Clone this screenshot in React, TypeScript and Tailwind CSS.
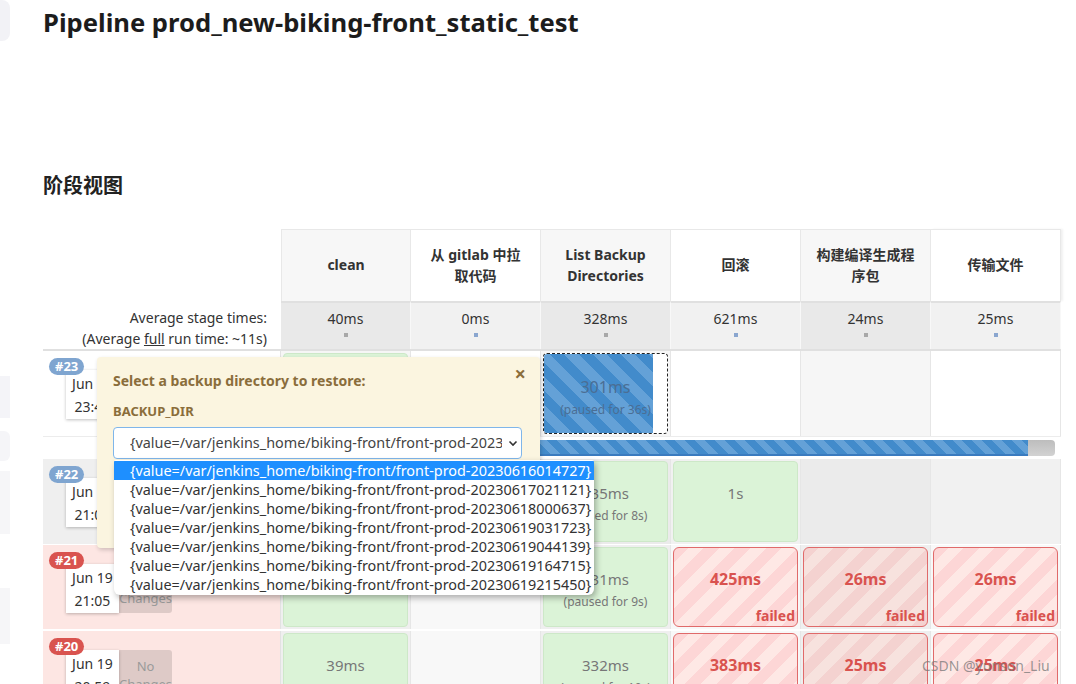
import React from 'react';

const FONT = "font-['Noto_Sans','Noto_Sans_CJK_SC',sans-serif]";

const stages = [
  { l1: 'clean', l2: '', avg: '40ms' },
  { l1: '从 gitlab 中拉', l2: '取代码', avg: '0ms' },
  { l1: 'List Backup', l2: 'Directories', avg: '328ms' },
  { l1: '回滚', l2: '', avg: '621ms' },
  { l1: '构建编译生成程', l2: '序包', avg: '24ms' },
  { l1: '传输文件', l2: '', avg: '25ms' },
];

const options = [
  '20230616014727',
  '20230617021121',
  '20230618000637',
  '20230619031723',
  '20230619044139',
  '20230619164715',
  '20230619215450',
];

type Cell =
  | { kind: 'empty' }
  | { kind: 'ok'; time: string; paused?: string }
  | { kind: 'fail'; time: string }
  | { kind: 'paused'; time: string; paused: string };

type Build = {
  id: string;
  badge: string;
  rowBg: string;
  odd: string;
  even: string;
  date: string;
  time: string;
  h: string;
  cells: Cell[];
};

const builds: Build[] = [
  {
    id: '#23',
    badge: 'bg-[#7fa5d0]',
    rowBg: 'bg-white',
    odd: 'bg-[#f6f6f6]',
    even: 'bg-white',
    date: 'Jun 19',
    time: '23:45',
    h: 'h-[85px]',
    cells: [
      { kind: 'ok', time: '40ms' },
      { kind: 'empty' },
      { kind: 'paused', time: '301ms', paused: '(paused for 36s)' },
      { kind: 'empty' },
      { kind: 'empty' },
      { kind: 'empty' },
    ],
  },
  {
    id: '#22',
    badge: 'bg-[#7fa5d0]',
    rowBg: 'bg-[#efefef]',
    odd: 'bg-[#ebebeb]',
    even: 'bg-[#f1f1f1]',
    date: 'Jun 19',
    time: '21:08',
    h: 'h-[85px]',
    cells: [
      { kind: 'ok', time: '38ms' },
      { kind: 'empty' },
      { kind: 'ok', time: '335ms', paused: '(paused for 8s)' },
      { kind: 'ok', time: '1s' },
      { kind: 'empty' },
      { kind: 'empty' },
    ],
  },
  {
    id: '#21',
    badge: 'bg-[#d9534f]',
    rowBg: 'bg-[#fde6e3]',
    odd: 'bg-[#efefef]',
    even: 'bg-[#f8f8f8]',
    date: 'Jun 19',
    time: '21:05',
    h: 'h-[84px]',
    cells: [
      { kind: 'ok', time: '41ms' },
      { kind: 'empty' },
      { kind: 'ok', time: '331ms', paused: '(paused for 9s)' },
      { kind: 'fail', time: '425ms' },
      { kind: 'fail', time: '26ms' },
      { kind: 'fail', time: '26ms' },
    ],
  },
  {
    id: '#20',
    badge: 'bg-[#d9534f]',
    rowBg: 'bg-[#fde6e3]',
    odd: 'bg-[#efefef]',
    even: 'bg-[#f8f8f8]',
    date: 'Jun 19',
    time: '20:59',
    h: 'h-[84px]',
    cells: [
      { kind: 'ok', time: '39ms' },
      { kind: 'empty' },
      { kind: 'ok', time: '332ms', paused: '(paused for 10s)' },
      { kind: 'fail', time: '383ms' },
      { kind: 'fail', time: '25ms' },
      { kind: 'fail', time: '25ms' },
    ],
  },
];

function StageCell({ cell, col }: { cell: Cell; col: number }) {
  if (cell.kind === 'empty') return null;
  if (cell.kind === 'ok') {
    return (
      <div className="flex h-full flex-col items-center rounded-[4px] border border-[#cde8c8] bg-[#dbf3d7] pt-[20px] text-[#777]">
        <span className="text-[15px] leading-[22px]">{cell.time}</span>
        {cell.paused && <span className="mt-[4px] text-[12px] leading-[16px]">{cell.paused}</span>}
      </div>
    );
  }
  if (cell.kind === 'paused') {
    return (
      <div className="relative h-full overflow-hidden rounded-[4px] border border-dashed border-[#222] bg-white">
        <div className="h-full w-[89%] bg-[image:repeating-linear-gradient(45deg,#428bcb_0px,#428bcb_10px,#64a1d7_10px,#64a1d7_20px)]" />
        <div className="absolute inset-0 flex flex-col items-center pt-[22px] text-[#4b6e94]">
          <span className="text-[16px] leading-[22px]">{cell.time}</span>
          <span className="mt-[4px] text-[12px] leading-[16px]">{cell.paused}</span>
        </div>
      </div>
    );
  }
  const stripes =
    col % 2 === 0
      ? 'bg-[image:repeating-linear-gradient(-45deg,#f4d2d0_0px,#f4d2d0_11px,#f7e2de_11px,#f7e2de_22px)]'
      : 'bg-[image:repeating-linear-gradient(-45deg,#fdd6d6_0px,#fdd6d6_11px,#fee8e5_11px,#fee8e5_22px)]';
  return (
    <div className={`relative flex h-full flex-col items-center rounded-[6px] border border-[#e06a6a] ${stripes}`}>
      <span className="mt-[20px] text-[16px] font-bold leading-[22px] text-[#d9534f]">{cell.time}</span>
      <span className="absolute bottom-[1px] right-[2px] text-[14px] font-bold leading-[18px] text-[#d9534f]">failed</span>
    </div>
  );
}

function BuildRow({ b }: { b: Build }) {
  return (
    <div className={`flex ${b.h}`}>
      <div className={`w-[238px] shrink-0 border-r border-[#e2e2e2] ${b.rowBg} pl-[6px] pt-[7px]`}>
        <div className={`relative z-10 w-fit rounded-full ${b.badge} px-[6px] text-[13px] font-bold leading-[17px] text-white`}>
          {b.id}
        </div>
        <div className="-mt-[5px] ml-[17px] flex h-[49px]">
          <div className="flex w-[53px] flex-col items-center justify-center bg-white text-[14px] leading-[23px] text-[#333] shadow-[0_1px_3px_rgba(0,0,0,0.25)]">
            <span>{b.date}</span>
            <span>{b.time}</span>
          </div>
          <div className="flex w-[53px] flex-col items-center justify-center rounded-r-[3px] bg-[rgba(0,0,0,0.12)] text-[13px] leading-[18px] text-[#9a9a9a]">
            <span>No</span>
            <span>Changes</span>
          </div>
        </div>
      </div>
      {b.cells.map((c, i) => (
        <div
          key={i}
          className={`w-[130px] shrink-0 border-r border-[#e6e6e6] p-[2px] ${i % 2 === 0 ? b.odd : b.even}`}
        >
          <StageCell cell={c} col={i} />
        </div>
      ))}
    </div>
  );
}

export default function App() {
  return (
    <div className={`relative h-[684px] w-[1076px] overflow-hidden bg-white ${FONT} text-[#333]`}>
      <div className="flex">
        {/* left sidebar remnants */}
        <div className="flex w-[10px] shrink-0 flex-col">
          <div className="h-[41px] rounded-r-[8px] bg-[#f2f2f6]" />
          <div className="mt-[335px] h-[42px] bg-[#f4f4f8]" />
          <div className="mt-[13px] h-[30px] rounded-r-[6px] bg-[#f5f5f8]" />
          <div className="mt-[10px] h-[63px] bg-[#f6f6f8]" />
          <div className="mt-[54px] h-[56px] bg-[#f6f6f8]" />
        </div>

        <div className="flex-1 pl-[33px]">
          <h1 className="mt-[8px] text-[25.6px] font-bold leading-[30px] text-[#1c1c1c]">
            Pipeline prod_new-biking-front_static_test
          </h1>
          <h2 className="mt-[134px] text-[20px] font-bold leading-[28px] text-[#222]">阶段视图</h2>

          <div className="mt-[29px] w-[1018px]">
            {/* header */}
            <div className="flex h-[72px]">
              <div className="w-[238px] shrink-0" />
              {stages.map((s, i) => (
                <div
                  key={i}
                  className={`flex w-[130px] shrink-0 flex-col items-center justify-center border-t border-r border-[#e8e8e8] pb-[2px] text-[14px] font-bold leading-[21px] text-[#333] ${
                    i === 0 ? 'border-l' : ''
                  } ${i % 2 === 0 ? 'bg-[#f7f7f7]' : 'bg-white'} ${i === 5 ? 'shadow-[2px_0_2px_rgba(0,0,0,0.06)]' : ''}`}
                >
                  <span>{s.l1}</span>
                  {s.l2 && <span>{s.l2}</span>}
                </div>
              ))}
            </div>

            {/* averages */}
            <div className="flex h-[50px] border-b-2 border-[#e0e0e0]">
              <div className="flex w-[238px] shrink-0 flex-col items-end justify-center pr-[14px] pt-[5px] text-[14px] leading-[21px] text-[#333]">
                <span>Average stage times:</span>
                <span>
                  (Average <span className="underline">full</span> run time: ~11s)
                </span>
              </div>
              {stages.map((s, i) => (
                <div
                  key={i}
                  className={`flex w-[130px] shrink-0 flex-col items-center border-t-2 border-r border-t-[#e0e0e0] border-r-[#f8f8f8] pt-[6px] ${
                    i % 2 === 0 ? 'bg-[#e9e9e9]' : 'bg-[#f1f1f1]'
                  }`}
                >
                  <span className="text-[14px] leading-[20px]">{s.avg}</span>
                  <span className={`mt-[4px] h-[4px] w-[4px] ${i % 2 === 1 || i === 3 ? 'bg-[#8aa6cf]' : 'bg-[#a8a8a8]'}`} />
                </div>
              ))}
            </div>

            <BuildRow b={builds[0]} />
            {/* progress row */}
            <div className="flex h-[22px] border-t border-[#ececec]">
              <div className="w-[238px] shrink-0 bg-white" />
              <div className="flex w-[780px] items-center pl-[2px] pr-[6px]">
                <div className="flex h-[16px] flex-1 overflow-hidden rounded-[4px] bg-[linear-gradient(#bdbdbd,#d2d2d2)]">
                  <div className="h-full w-[96.5%] border-b-2 border-[#3a7bbf] bg-[image:repeating-linear-gradient(45deg,#428bcb_0px,#428bcb_7px,#64a1d7_7px,#64a1d7_14px)]" />
                </div>
              </div>
            </div>
            <div className="border-t border-white">
              <BuildRow b={builds[1]} />
            </div>
            <div className="border-t border-white">
              <BuildRow b={builds[2]} />
            </div>
            <div className="border-t-2 border-white">
              <BuildRow b={builds[3]} />
            </div>
          </div>
        </div>
      </div>

      {/* input popup */}
      <div className="absolute left-[97px] top-[357px] z-20 h-[191px] w-[443px] rounded-[4px] bg-[#fbf5e0] px-[16px] shadow-[1px_2px_4px_rgba(0,0,0,0.18)]">
        <div className="flex items-start justify-between pt-[14px]">
          <span className="text-[14px] font-bold leading-[20px] text-[#8a6d3b]">Select a backup directory to restore:</span>
          <span className="-mt-[8px] mr-[-2px] text-[20px] font-bold leading-[22px] text-[#8a6d3b]">×</span>
        </div>
        <div className="mt-[10px] text-[13px] font-bold leading-[20px] text-[#8a6d3b]">BACKUP_DIR</div>
        <div className="mt-[6px] flex h-[32px] w-[409px] items-center overflow-hidden rounded-[4px] border border-[#7fb6ea] bg-white pl-[16px]">
          <span className="w-[372px] shrink-0 overflow-hidden whitespace-nowrap text-[14.4px] text-[#444]">
            {'{value=/var/jenkins_home/biking-front/front-prod-20230616014727}'}
          </span>
          <svg width="12" height="12" viewBox="0 0 12 12" className="ml-[5px] shrink-0">
            <path d="M2.5 4.5 L6 8 L9.5 4.5" fill="none" stroke="#333" strokeWidth="1.6" />
          </svg>
        </div>
      </div>

      {/* open dropdown list */}
      <div className="absolute left-[114px] top-[460px] z-30 w-[480px] overflow-hidden rounded-b-[6px] rounded-t-[2px] bg-white py-[1px] shadow-[2px_3px_6px_rgba(0,0,0,0.3)]">
        {options.map((o, i) => (
          <div
            key={o}
            className={`h-[19px] whitespace-nowrap pl-[16px] text-[14.4px] leading-[19px] ${
              i === 0 ? 'bg-[#1e8fff] text-white' : 'text-[#333]'
            }`}
          >
            {`{value=/var/jenkins_home/biking-front/front-prod-${o}}`}
          </div>
        ))}
      </div>

      {/* watermark */}
      <div className="absolute left-[922px] top-[656px] z-40 text-[14px] leading-[20px] text-[rgba(120,120,120,0.75)]">
        CSDN @yunson_Liu
      </div>
    </div>
  );
}
